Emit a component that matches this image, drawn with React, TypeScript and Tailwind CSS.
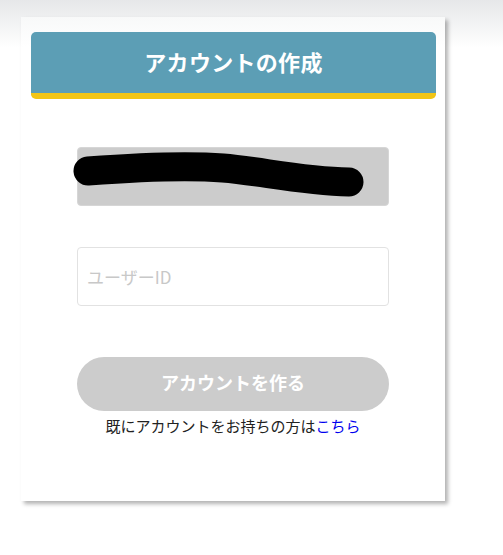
import { useState } from "react";

const jp = { fontFamily: '"Noto Sans CJK JP", "Noto Sans", sans-serif' };

export default function App() {
  const [userId, setUserId] = useState("");

  return (
    <div
      style={jp}
      className="min-h-[555px] bg-white bg-[linear-gradient(to_bottom,#e6e7e9_0px,#ffffff_48px)] pt-[17px] pl-[21px]"
    >
      <div className="w-[424px] h-[484px] bg-[linear-gradient(to_bottom,#f8f9f9_0px,#ffffff_30px)] shadow-[3px_3px_4px_rgba(0,0,0,0.3)] pt-[15px] flex flex-col">
        {/* header */}
        <div className="ml-[10px] w-[405px] h-[67px] rounded-[5px] bg-[#5c9eb5] border-b-[6px] border-[#f2c515] flex items-center justify-center pb-[4px]">
          <h1 className="text-white font-bold text-[22px] leading-none tracking-[0.3px]">
            アカウントの作成
          </h1>
        </div>

        <div className="flex flex-col items-center mt-[48px]">
          {/* redacted field */}
          <div className="relative w-[312px] h-[59px] rounded-[4px] bg-[#cccccc] border border-[#d6d6d6]">
            <svg
              className="absolute left-[-5px]"
              width="320"
              height="220"
              viewBox="72 0 320 220"
              style={{ top: -147 }}
            >
              <path
                d="M87 170 C 140 166, 185 164, 222 167 S 300 180, 348 181"
                fill="none"
                stroke="#000"
                strokeWidth="29"
                strokeLinecap="round"
              />
            </svg>
          </div>

          {/* user id */}
          <input
            value={userId}
            onChange={(e) => setUserId(e.target.value)}
            placeholder="ユーザーID"
            className="mt-[41px] w-[312px] h-[59px] rounded-[4px] border border-[#e2e2e2] bg-white px-[9px] text-[17px] text-[#333] placeholder:text-[#c8c8c8] outline-none"
          />

          <button className="mt-[51px] w-[312px] h-[54px] rounded-full bg-[#cccccc] text-white font-bold text-[18px] pb-[3px]">
            アカウントを作る
          </button>

          <p className="mt-[5px] text-[15px] leading-[20px] text-[#222]">
            既にアカウントをお持ちの方は
            <a href="#" className="text-[#0000ee]">
              こちら
            </a>
          </p>
        </div>
      </div>
    </div>
  );
}
